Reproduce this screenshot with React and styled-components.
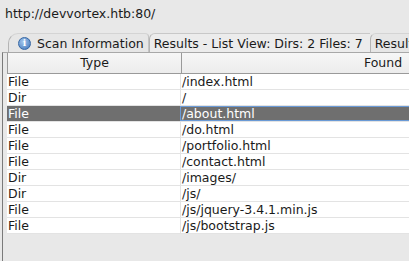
import styled, { createGlobalStyle } from "styled-components";

const GlobalStyle = createGlobalStyle`
  body {
    margin: 0;
    background: #e8e8e8;
    font-family: "DejaVu Sans", "Liberation Sans", sans-serif;
  }
`;

const Frame = styled.div`
  width: 409px;
  height: 261px;
  overflow: hidden;
  display: flex;
  flex-direction: column;
  background: #e8e8e8;
  color: #1a1a1a;
  font-size: 12.5px;
`;

const UrlLine = styled.div`
  height: 33px;
  padding: 6px 0 0 5px;
  box-sizing: border-box;
  line-height: 16px;
`;

const TabStrip = styled.div`
  display: flex;
  align-items: flex-end;
  height: 19px;
  padding-left: 8px;
  white-space: nowrap;
`;

const Tab = styled.div`
  display: flex;
  align-items: center;
  gap: 6px;
  height: 19px;
  padding: 0 ${(p) => (p.first ? "4px" : "7px")} 0 ${(p) => (p.first ? "9px" : "4px")};
  box-sizing: border-box;
  background: ${(p) => (p.active ? "#ececec" : "#e6e6e6")};
  border-left: 1px solid #b4b4b4;
  border-right: ${(p) => (p.first ? "1px solid #c4c4c4" : "none")};
  border-top: 1px solid ${(p) => (p.active ? "#c8c8c8" : "#d4d4d4")};
  border-radius: ${(p) => (p.first ? "10px 4px 0 0" : "6px 0 0 0")};
  flex-shrink: 0;
`;

const InfoIcon = styled.span`
  width: 13px;
  height: 13px;
  border-radius: 50%;
  background: radial-gradient(circle at 40% 35%, #a6c8ee, #3c73b8);
  border: 1px solid #3566a4;
  box-sizing: border-box;
  color: #fff;
  font-size: 9px;
  font-weight: bold;
  line-height: 11px;
  text-align: center;
  font-family: "DejaVu Serif", serif;
`;

const Pane = styled.div`
  flex: 1;
  display: flex;
  margin-left: 2px;
  border-left: 1px solid #7a7a7a;
  border-top: 1px solid #a8a8a8;
  padding-left: 4px;
  background: #e8e8e8;
`;

const Table = styled.div`
  width: 578px;
  flex-shrink: 0;
  display: flex;
  flex-direction: column;
`;

const Header = styled.div`
  display: grid;
  grid-template-columns: 173px 1fr;
  height: 21px;
  background: linear-gradient(#f6f6f6, #ececec);
  border: 1px solid #9a9a9a;
  border-top: none;
  box-sizing: border-box;
`;

const HeaderCell = styled.div`
  text-align: center;
  line-height: 20px;
  border-left: ${(p) => (p.divider ? "1px solid #9a9a9a" : "none")};
`;

const Row = styled.div`
  display: grid;
  grid-template-columns: 173px 1fr;
  height: 16px;
  background: ${(p) => (p.selected ? "#6f6f6f" : "#fff")};
  color: ${(p) => (p.selected ? "#fff" : "#1a1a1a")};
  border-bottom: 1px solid #e3e3e3;
  box-sizing: border-box;
`;

const Cell = styled.div`
  padding-left: 1px;
  line-height: 15px;
  white-space: nowrap;
  border-left: ${(p) => (p.divider ? "1px solid #e3e3e3" : "none")};
  ${(p) => p.focused && "outline: 1px solid #6a9ad6; outline-offset: -1px;"}
`;

const rows = [
  ["File", "/index.html"],
  ["Dir", "/"],
  ["File", "/about.html"],
  ["File", "/do.html"],
  ["File", "/portfolio.html"],
  ["File", "/contact.html"],
  ["Dir", "/images/"],
  ["Dir", "/js/"],
  ["File", "/js/jquery-3.4.1.min.js"],
  ["File", "/js/bootstrap.js"],
];

export default function App() {
  return (
    <>
      <GlobalStyle />
      <Frame>
        <UrlLine>http://devvortex.htb:80/</UrlLine>
        <TabStrip>
          <Tab first>
            <InfoIcon>i</InfoIcon>
            Scan Information
          </Tab>
          <Tab active>Results - List View: Dirs: 2 Files: 7</Tab>
          <Tab>Results - Tree View</Tab>
        </TabStrip>
        <Pane>
          <Table>
            <Header>
              <HeaderCell>Type</HeaderCell>
              <HeaderCell divider>Found</HeaderCell>
            </Header>
            {rows.map((r, i) => (
              <Row key={i} selected={i === 2}>
                <Cell>{r[0]}</Cell>
                <Cell divider focused={i === 2}>{r[1]}</Cell>
              </Row>
            ))}
          </Table>
        </Pane>
      </Frame>
    </>
  );
}
